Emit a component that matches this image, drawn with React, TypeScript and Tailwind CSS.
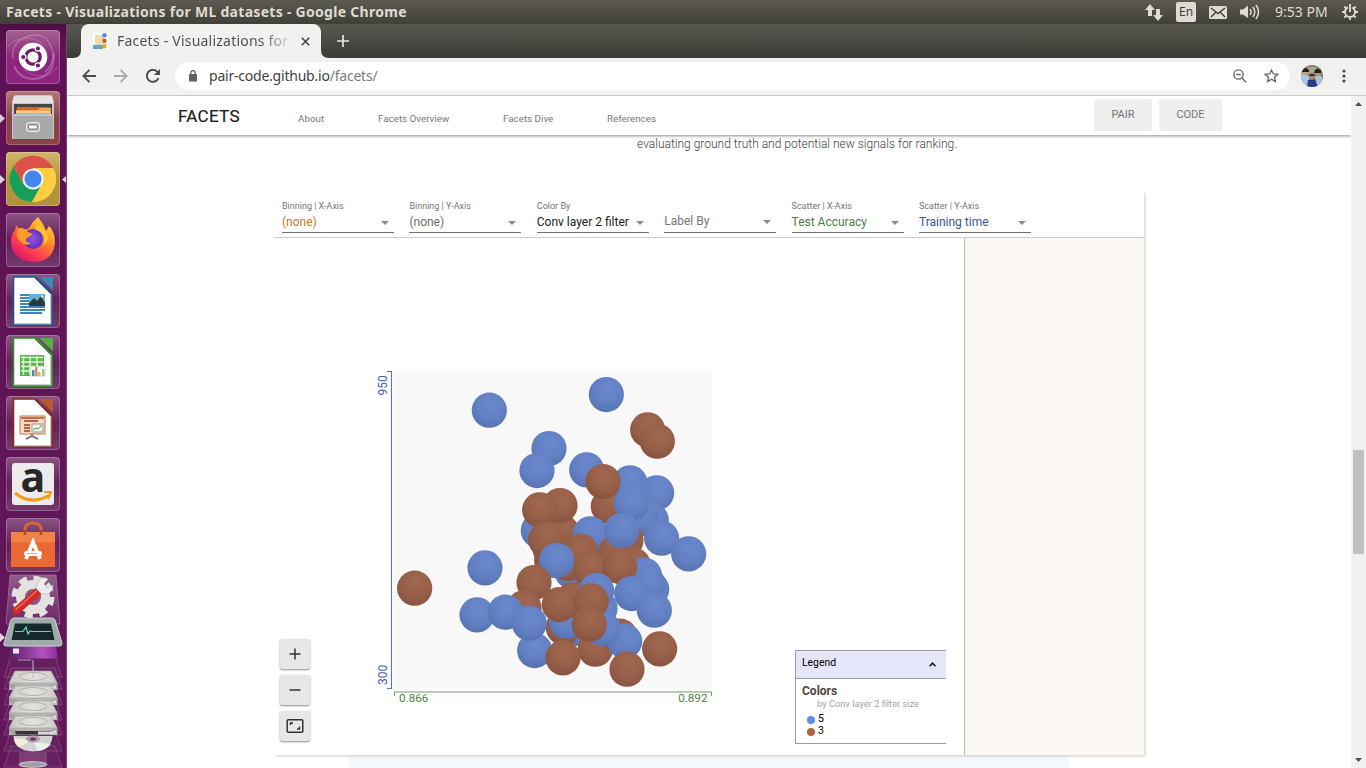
import React from "react";

const UI = "font-['Noto_Sans','Open_Sans',sans-serif]";

/* ---------- Launcher ---------- */

function Tile({ bg, children, left, right }: { bg: string; children: React.ReactNode; left?: boolean; right?: boolean }) {
  return (
    <div className="flex h-[54px] w-[67px] shrink-0 items-center">
      <div className="flex w-[6px] items-center">
        {left && <svg width="6" height="9"><path d="M0 0L5 4.5L0 9Z" fill="#d9cfd7" /></svg>}
      </div>
      <div className={`h-[54px] w-[54px] rounded-[4px] ${bg}`}>
        <svg className="overflow-visible" width="54" height="54" viewBox="0 0 54 54">
          {children}
          <rect x=".5" y=".5" width="53" height="53" rx="3.5" fill="none" stroke="#fff" strokeOpacity=".22" />
        </svg>
      </div>
      <div className="flex w-[7px] items-center justify-end">
        {right && <svg width="6" height="9"><path d="M6 0L1 4.5L6 9Z" fill="#d9cfd7" /></svg>}
      </div>
    </div>
  );
}

const glass = "bg-linear-to-b from-[#8a5482] via-[#651d5b] to-[#743b6c]";

function Sheet({ edge, fold, children }: { edge: string; fold: string; children: React.ReactNode }) {
  return (
    <>
      <path d="M7.5 3H29L46 20V51H7.5Z" fill="#fff" stroke={edge} strokeWidth="1.6" />
      <path d="M9 49.500H44.500V21" fill="none" stroke="#c9c9c9" strokeWidth="1" />
      <path d="M29 3L46 20" stroke={edge} strokeWidth="2" />
      <path d="M33.500 3H47V16.500Z" fill={fold} />
      {children}
    </>
  );
}

function Drive({ y }: { y: number }) {
  return (
    <g transform={`translate(0 ${y})`}>
      <path d="M15 -1H51L57.500 11V18H9V11Z" fill="#bab8b6" />
      <path d="M15 -1H51L57 11H9Z" fill="url(#drv)" stroke="#9d9a97" strokeWidth=".6" />
      <ellipse cx="33" cy="4.500" rx="14" ry="4" fill="none" stroke="#aaa7a4" strokeWidth=".8" />
      <path d="M9 11.500L26 15H40L57.500 11.500V15L52 18H14L9 15Z" fill="#a5a29f" />
      <path d="M15 14H50V17.400H16Z" fill="#373432" />
      <path d="M38 14.500H52L56 13V16L51 17.500H38Z" fill="#dcdad8" />
    </g>
  );
}

function FoldedStack() {
  return (
    <svg width="67" height="195" viewBox="0 573 67 195" className="shrink-0">
      <defs>
        <linearGradient id="desk" x1="0" x2="1"><stop offset="0" stopColor="#581b66" /><stop offset=".7" stopColor="#b254c0" /><stop offset="1" stopColor="#8e2d9d" /></linearGradient>
        <linearGradient id="drv" x1="0" x2="1"><stop offset="0" stopColor="#c9c7c5" /><stop offset=".5" stopColor="#e4e2e0" /><stop offset="1" stopColor="#cfcdcb" /></linearGradient>
        <linearGradient id="tl" x1="0" x2="0" y1="0" y2="1"><stop offset="0" stopColor="#fff" stopOpacity=".3" /><stop offset="1" stopColor="#fff" stopOpacity=".08" /></linearGradient>
      </defs>
      <path d="M10 575H56L60 624H6Z" fill="url(#tl)" stroke="#a17b9c" strokeWidth=".7" />
      <circle cx="33" cy="597" r="17" fill="#e3e2e1" />
      <circle cx="33" cy="597" r="18.500" fill="none" stroke="#e3e2e1" strokeWidth="6" strokeDasharray="8 6.530" />
      <circle cx="33" cy="597" r="8" fill="#87577f" />
      <path d="M12.500 609L36 588L41.500 594L19 613.500Q12 617 12.500 609Z" fill="#cf2c26" />
      <path d="M15.500 610L37 590.500" stroke="#ec6a60" strokeWidth="1.500" />
      <path d="M36 588L39 580Q43 576 48 579L44 584L47 588L53 585Q53 592 47 594L41.500 594Z" fill="#ededed" stroke="#aaa" strokeWidth=".5" />
      {[656, 668, 684, 699, 714, 730, 746].map((y) => (
        <path key={y} d={`M11 ${y}H55L62 ${y + 21}H4Z`} fill="#fff" fillOpacity=".035" stroke="#9f739a" strokeOpacity=".65" strokeWidth=".7" />
      ))}
      <path d="M10 645H56L57.500 658.500H8.500Z" fill="url(#desk)" />
      <path d="M13 648.500h6v5h-6z" fill="#fff" opacity=".9" />
      <path d="M18 660H31" stroke="#ada3ad" />
      <path d="M14 618H52Q54 618 55 620L62 643Q62 646 60 646H6Q3 646 4 643L11 620Q12 618 14 618Z" fill="#9fabaa" stroke="#ccd5d4" strokeWidth="1" />
      <path d="M15 623.500H51L54.500 640H11.500Z" fill="#15282b" />
      <path d="M15 631.500H23L26 627L28 634L30 631L32 631.500H51" fill="none" stroke="#62d6b8" strokeWidth="1.200" />
      <path d="M0 633L5 637.500L0 642Z" fill="#ddd5dc" />
      <Drive y={672} /><Drive y={687} /><Drive y={702} /><Drive y={717} />
      <path d="M33 660V678" stroke="#c3bcc2" strokeWidth="1" />
      <path d="M13.500 736Q14 750.500 33 751.500Q52 750.500 52.500 736Z" fill="#d5d3d1" />
      <path d="M33 740L14 738Q14 743 19 747Z" fill="#f5efdc" /><path d="M33 742L51 744Q46 750 38 751Z" fill="#ecf3ea" />
      <ellipse cx="33" cy="739" rx="7" ry="3.500" fill="#b699b1" /><ellipse cx="33" cy="739" rx="3" ry="1.500" fill="#6a3363" />
      <path d="M19 752H47V765H19Z" fill="#fff" fillOpacity=".14" />
      <ellipse cx="33" cy="764.500" rx="14" ry="2.800" fill="#a39da1" stroke="#e7e3e6" strokeWidth=".8" />
    </svg>
  );
}

function Launcher() {
  return (
    <aside className="flex w-[67px] shrink-0 flex-col gap-[7px] overflow-hidden border-r border-[#7c4274] bg-linear-to-b from-[#4b0d42] via-[#5e1254] via-[3%] to-[#61175a] pt-[6px]">
      <Tile bg="bg-linear-to-b from-[#a4618f] via-[#8d257d] to-[#8e2680]">
        <path d="M7 29Q5 14 18 8Q37 -1 45 16Q51 31 39 42" fill="none" stroke="#dda5d2" strokeOpacity=".5" strokeWidth="1.200" />
        <path d="M48 23Q49 47 28 49Q14 49 8 36" fill="none" stroke="#dda5d2" strokeOpacity=".4" strokeWidth="2" />
        <path d="M2 16Q20 0 40 16M52 36Q39 54 18 40" fill="none" stroke="#dda5d2" strokeOpacity=".35" strokeWidth="1" />
        <circle cx="27" cy="27" r="14.300" fill="#fff" />
        <circle cx="27" cy="27" r="7.200" fill="none" stroke="#701b62" strokeWidth="3.200" />
        <g fill="#701b62" stroke="#fff" strokeWidth="1.200"><circle cx="17.300" cy="27" r="2.700" /><circle cx="31.900" cy="18.500" r="2.700" /><circle cx="31.900" cy="35.500" r="2.700" /></g>
      </Tile>
      <Tile bg="bg-linear-to-b from-[#b77777] via-[#89434a] to-[#91404a]" left>
        <path d="M8 5Q8 4 10 4H44Q46 4 46 5L48 13V48H6V13Z" fill="#c8c8c8" />
        <path d="M8 5H46L48 12H6Z" fill="#e3e3e3" />
        <path d="M8 13H46V26H8Z" fill="#494440" />
        <path d="M11 16H44V24H11Z" fill="#d46924" /><path d="M10 19H31L34 17H45V25H10Z" fill="#f0a552" />
        <path d="M10 21H44" stroke="#fff0da" />
        <path d="M7 23H47V48H7Z" fill="#a9a9a9" /><path d="M8 24H46" stroke="#ddd" />
        <rect x="20.500" y="31.500" width="13" height="9" rx="2" fill="#bbb" stroke="#eee" />
        <rect x="22.500" y="34" width="9" height="4" rx="1" fill="#fff" stroke="#777" />
      </Tile>
      <Tile bg="bg-linear-to-b from-[#d0b76d] via-[#b5933b] to-[#b0933f]" left right>
        <circle cx="27" cy="27" r="23" fill="#f9cb3c" />
        <path d="M27 27L47 15.500A23 23 0 0 0 7.500 14.500L17 32Z" fill="#dc5148" />
        <path d="M7.500 14.500A23 23 0 0 0 26 50L36 32L27 37L17 32Z" fill="#159f5b" />
        <path d="M27 16H47.200A23 23 0 0 1 26 50L36 32Z" fill="#fdce42" />
        <circle cx="27" cy="27" r="10.500" fill="#f4f4f4" /><circle cx="27" cy="27" r="8.500" fill="#4286ee" />
      </Tile>
      <Tile bg={glass}>
        <defs>
          <linearGradient id="fox" x1="1" x2=".3" y1="0" y2="1"><stop offset="0" stopColor="#fff04d" /><stop offset=".4" stopColor="#ff9821" /><stop offset=".72" stopColor="#ff444c" /><stop offset="1" stopColor="#df166f" /></linearGradient>
          <radialGradient id="globe"><stop offset="0" stopColor="#a34ce8" /><stop offset="1" stopColor="#5834c0" /></radialGradient>
        </defs>
        <path d="M9 17L10 12L15 17L22 16L27 9L32 4L37 11L40 18L43 13Q49 19 49 29Q48 48 28 49Q8 48 5 31Q4 23 9 17Z" fill="url(#fox)" />
        <circle cx="27" cy="26" r="10" fill="url(#globe)" />
        <path d="M12 16Q17 13 22 19L27 21L21 25Q17 29 25 30Q20 34 15 29Q8 23 12 16Z" fill="#ff9c2c" />
        <path d="M30 17Q42 20 37 33Q42 29 42 24Q40 15 30 11Z" fill="#ffc72f" />
      </Tile>
      <Tile bg={glass}>
        <Sheet edge="#145b88" fold="#3c8ab7">
          <path d="M14 21H39M14 24H39M14 27H39M14 30H39M14 33H39M14 36H39M14 39H36" stroke="#3d88b8" strokeWidth="1.800" />
          <rect x="23" y="20" width="16" height="12" fill="#62b0df" /><path d="M23 29L28 24L31 27L35 22L39 29V32H23Z" fill="#233d35" /><circle cx="36" cy="22.500" r="1.300" fill="#ffdf67" />
        </Sheet>
      </Tile>
      <Tile bg={glass}>
        <Sheet edge="#299323" fold="#51b343">
          <rect x="14" y="20" width="24" height="21" fill="#54b548" />
          <path d="M15 22.500H37M15 27H37M15 31.500H37M15 36H37M17.500 21V40M24 21V40M31 21V40" stroke="#e5f6e1" strokeWidth="1.500" />
          <rect x="24.500" y="31.500" width="15" height="10" fill="#fff" stroke="#ccc" strokeWidth=".5" />
          <path d="M26 35h2.500v6H26z" fill="#418dca" /><path d="M29 32h2.500v9H29z" fill="#e18a63" /><path d="M32 37h2.500v4H32z" fill="#e8b941" /><path d="M36 34h2.500v7H36z" fill="#90c9a0" />
        </Sheet>
      </Tile>
      <Tile bg={glass}>
        <Sheet edge="#833017" fold="#ba5c2a">
          <path d="M14 20H39V38H14Z" fill="#fbd9c3" stroke="#ca7043" /><path d="M15 22H38" stroke="#ab4c28" strokeWidth="1.500" />
          <path d="M18 25H32M18 29H24M18 32H24M18 35H24" stroke="#963e23" strokeWidth="1.400" /><rect x="26" y="28" width="11" height="8" fill="#edf4e9" stroke="#777" strokeWidth=".7" />
          <path d="M27 34L30 32L32 33L36 29" fill="none" stroke="#41a246" /><path d="M26 38V40L20 43M26 40L32 43" fill="none" stroke="#666" strokeWidth="1.500" />
        </Sheet>
      </Tile>
      <Tile bg={glass}>
        <rect x="6" y="6" width="42" height="42" rx="3" fill="#ececec" />
        <text x="27" y="34.500" textAnchor="middle" fontFamily="Open Sans" fontWeight="700" fontSize="41" fill="#272727">a</text>
        <path d="M9 36Q25 49 44 38" fill="none" stroke="#f89a18" strokeWidth="3" /><path d="M38 35L45 35L42 42" fill="none" stroke="#f89a18" strokeWidth="2" />
      </Tile>
      <Tile bg={glass}>
        <path d="M19 17V10Q20 5 27 5Q34 5 35 10V17" fill="none" stroke="#d76536" strokeWidth="3" />
        <path d="M5 14H49V49H5Z" fill="#ed6932" /><path d="M5 14H49V24H5Z" fill="#f18349" />
        <path d="M19 17V12M35 17V12" stroke="#b54624" strokeWidth="2.500" />
        <path d="M20 41L27 24L34 41" fill="none" stroke="#fff" strokeWidth="3.800" /><rect x="18" y="33" width="18" height="5" rx="2.500" fill="#fff" /><path d="M21 35.500H31" stroke="#f3a67f" strokeWidth="1" />
      </Tile>
      <div className="-mt-[6px]"><FoldedStack /></div>
    </aside>
  );
}

/* ---------- System bar and browser chrome ---------- */

function SystemBar() {
  return (
    <div className={`flex h-[24px] shrink-0 items-center bg-linear-to-b from-[#5c5a50] to-[#403f39] pl-[6px] pr-[8px] text-[#dfdbd2] ${UI}`}>
      <span className="w-[402px] whitespace-nowrap pb-px text-[14px] font-bold leading-[23px] tracking-[0.29px]">Facets - Visualizations for ML datasets - Google Chrome</span>
      <div className="ml-auto flex items-center">
        <svg width="18" height="17" viewBox="0 0 18 17" fill="#dfdbd2"><path d="M5 0L10 6H7V12H3V6H0ZM13 17L8 11H11V5H15V11H18Z" /></svg>
        <span className="ml-[13px] flex h-[20px] w-[20px] items-center justify-center rounded-[2px] bg-[#dfdbd2] text-[12px] leading-[20px] text-[#3c3b37]">En</span>
        <svg className="ml-[13px]" width="18" height="13" viewBox="0 0 18 13"><rect width="18" height="13" rx="1.500" fill="#dfdbd2" /><path d="M2 2L9 7.500L16 2M2 11L6.500 6.500M16 11L11.500 6.500" fill="none" stroke="#3c3b37" strokeWidth="1.400" /></svg>
        <svg className="ml-[13px]" width="20" height="18" viewBox="0 0 20 18"><path d="M0 6.500H3L8 2.500V15L3 11.500H0Z" fill="#dfdbd2" /><path d="M10 6Q12 9 10 12M13 4Q16.500 9 13 14M16 2Q21 9 16 16" fill="none" stroke="#dfdbd2" strokeWidth="1.500" /></svg>
        <span className="ml-[15px] w-[54px] whitespace-nowrap pb-px text-[14px] leading-[23px]">9:53 PM</span>
        <svg className="ml-[13px]" width="16" height="16" viewBox="0 0 16 16" fill="none" stroke="#dfdbd2"><circle cx="8" cy="8" r="5" strokeWidth="1.800" strokeDasharray="27 4.400" strokeDashoffset="-25.300" /><path d="M8 0V8M0 8H3M13 8H16M8 13V16M2.300 2.300L4.500 4.500M13.700 2.300L11.500 4.500M2.300 13.700L4.500 11.500M13.700 13.700L11.500 11.500" strokeWidth="1.900" /></svg>
      </div>
    </div>
  );
}

function TabStrip() {
  return (
    <div className={`flex h-[34px] shrink-0 items-end bg-linear-to-b from-[#595850] to-[#3c3b37] pl-[6px] ${UI}`}>
      <svg width="8" height="8"><path d="M0 8Q8 8 8 0V8Z" fill="#f2f1f0" /></svg>
      <div className="flex h-[34px] w-[240px] items-center rounded-t-[8px] bg-[#f2f1f0] pl-[12px]">
        <svg width="16" height="16" viewBox="0 0 16 16"><rect width="16" height="16" fill="#fff" /><rect x="2" y="2" width="9" height="11" fill="#eed9b1" /><rect y="12" width="10" height="4" fill="#65a6bc" /><circle cx="11.500" cy="2.200" r="2.200" fill="#4f86ee" /><circle cx="11.500" cy="7.800" r="2.200" fill="#c95a23" /><circle cx="11.500" cy="13.200" r="2.200" fill="#e8aa23" /></svg>
        <span className="ml-[8px] w-[174px] whitespace-nowrap bg-linear-to-r from-[#4c4c4c] from-[82%] to-[#4c4c4c22] bg-clip-text text-[14px] leading-[20px] tracking-[0.22px] text-transparent">Facets - Visualizations for</span>
        <svg className="ml-[10px]" width="9" height="9" viewBox="0 0 9 9"><path d="M.8 .8L8.200 8.200M8.200 .8L.8 8.200" stroke="#444" strokeWidth="1.600" /></svg>
      </div>
      <svg width="8" height="8"><path d="M8 8Q0 8 0 0V8Z" fill="#f2f1f0" /></svg>
      <svg className="mb-[11px] ml-[8px]" width="12" height="12"><path d="M6 0V12M0 6H12" stroke="#e7e6e3" strokeWidth="1.700" /></svg>
    </div>
  );
}

function Toolbar() {
  return (
    <div className={`flex h-[38px] shrink-0 items-center border-b border-[#cdcbc9] bg-[#f2f1f0] pb-px pl-[15px] pr-[20px] ${UI}`}>
      <svg width="14" height="14" viewBox="0 0 14 14" fill="none" stroke="#4b4b4b" strokeWidth="1.900"><path d="M14 7H1.500M7.500 .8L1.300 7L7.500 13.200" /></svg>
      <svg className="ml-[18px]" width="14" height="14" viewBox="0 0 14 14" fill="none" stroke="#aaa9a8" strokeWidth="1.900"><path d="M0 7H12.500M6.500 .8L12.700 7L6.500 13.200" /></svg>
      <svg className="ml-[18px]" width="15" height="14" viewBox="0 0 15 14"><path d="M12.500 9A6 6 0 1 1 11.500 3" fill="none" stroke="#4b4b4b" strokeWidth="1.900" /><path d="M14 0V6H8Z" fill="#4b4b4b" /></svg>
      <div className="ml-[14px] flex h-[28px] w-[1115px] items-center rounded-full bg-white pl-[14px] pr-[11px]">
        <svg width="8" height="12" viewBox="0 0 8 12"><rect y="4" width="8" height="7.500" rx=".8" fill="#606060" /><path d="M1.800 5V3Q2 .7 4 .7Q6 .7 6.200 3V5" fill="none" stroke="#606060" strokeWidth="1.200" /></svg>
        <span className="ml-[12px] w-[168px] whitespace-nowrap text-[14px] leading-[20px] tracking-[-0.22px] text-[#3f3f3f]">pair-code.github.io<span className="text-[#7b7b7b]">/facets/</span></span>
        <svg className="ml-auto" width="14" height="14" viewBox="0 0 14 14" fill="none" stroke="#666" strokeWidth="1.400"><circle cx="5.500" cy="5.500" r="4.600" /><path d="M8.900 8.900L13.200 13.200M3.200 5.500H7.800" /></svg>
        <svg className="ml-[17px]" width="15" height="14" viewBox="0 0 15 14" fill="none" stroke="#666" strokeWidth="1.300"><path d="M7.500 1.200L9.400 5L13.700 5.400L10.500 8.200L11.400 12.600L7.500 10.300L3.600 12.600L4.500 8.200L1.300 5.400L5.600 5Z" /></svg>
      </div>
      <svg className="ml-[11px]" width="22" height="22" viewBox="0 0 22 22">
        <defs><clipPath id="av"><circle cx="11" cy="11" r="11" /></clipPath></defs>
        <g clipPath="url(#av)"><path d="M0 0H22V22H0Z" fill="#7b8273" /><path d="M0 9Q5 8 8 12L9 22H0Z" fill="#a3c9eb" /><path d="M14 12Q20 8 22 15V22H13Z" fill="#aebfd1" /><path d="M7 15L14 14L17 22H6Z" fill="#273b85" /><path d="M6 2H15V8H6Z" fill="#a8a687" /><circle cx="4.500" cy="7" r="3.200" fill="#c99e80" /><path d="M1 5Q4 1 8 5V7H1Z" fill="#25201f" /><circle cx="11" cy="12" r="2.700" fill="#b88368" /><path d="M8 11Q11 7 14 11Z" fill="#201d1c" /><circle cx="17" cy="8" r="3" fill="#c48e74" /><path d="M13 8Q14 2 20 5V8Z" fill="#231f1e" /></g>
      </svg>
      <svg className="ml-auto" width="4" height="14" fill="#4b4b4b"><circle cx="2" cy="2" r="1.600" /><circle cx="2" cy="7" r="1.600" /><circle cx="2" cy="12" r="1.600" /></svg>
    </div>
  );
}

/* ---------- Page ---------- */

function SiteHeader() {
  return (
    <header className="relative z-10 flex h-[39px] shrink-0 items-center bg-white pb-px pl-[111px] pr-[129px] shadow-[0_1px_3px_rgba(0,0,0,0.45)]">
      <span className="mt-[2px] w-[120px] text-[17px] leading-[20px] tracking-[0.3px] text-[#212121] [-webkit-text-stroke:0.2px_#212121]">FACETS</span>
      <nav className="mt-[8px] flex text-[9.8px] leading-[14px] text-[#777]">
        <a className="w-[80px]">About</a>
        <a className="w-[125px] whitespace-nowrap">Facets Overview</a>
        <a className="w-[104px] whitespace-nowrap">Facets Dive</a>
        <a>References</a>
      </nav>
      <div className="ml-auto flex gap-[7px] text-[11px] leading-[32px] text-[#757575]">
        <span className="h-[32px] w-[58px] rounded-[2px] bg-[#efefef] text-center">PAIR</span>
        <span className="h-[32px] w-[63px] rounded-[2px] bg-[#efefef] text-center">CODE</span>
      </div>
    </header>
  );
}

function Select({ label, value, tone }: { label?: string; value: string; tone: string }) {
  return (
    <div className="mr-[15.400px] flex w-[112px] flex-col border-b border-[#707070]">
      <span className="h-[12px] whitespace-nowrap text-[9px] leading-[12px] text-[#757575]">{label}</span>
      <div className="flex h-[21px] items-center justify-between pr-[5px]">
        <span className={`whitespace-nowrap text-[12px] leading-[21px] ${tone}`}>{value}</span>
        <svg width="8" height="4"><path d="M0 0H8L4 4Z" fill="#8c8c8c" /></svg>
      </div>
    </div>
  );
}

type Dot = [number, number, "b" | "r"];
/* Listed from back to front, in units of a third of a pixel from the chart's corner. */
const dots: Dot[] = [
  [358, 135, "b"], [709, 88, "b"], [345, 608, "b"], [134, 669, "r"],
  [833, 194, "r"], [862, 228, "r"], [537, 250, "b"], [501, 316, "b"],
  [650, 314, "b"], [715, 423, "r"], [780, 353, "b"], [699, 349, "r"],
  [860, 383, "b"], [844, 466, "b"], [813, 455, "b"], [784, 414, "b"],
  [505, 496, "b"], [575, 500, "r"], [570, 421, "r"], [509, 434, "r"],
  [605, 618, "b"], [545, 585, "r"], [595, 595, "r"], [540, 550, "r"], [527, 523, "r"],
  [725, 545, "b"], [661, 506, "b"], [768, 525, "r"], [738, 560, "r"],
  [875, 519, "b"], [956, 566, "b"], [755, 496, "b"],
  [631, 558, "r"], [660, 612, "r"], [560, 586, "b"],
  [790, 600, "r"], [800, 632, "b"], [823, 630, "b"], [845, 672, "b"], [833, 655, "b"],
  [749, 604, "r"], [785, 685, "b"], [853, 735, "b"],
  [492, 652, "r"], [462, 728, "r"], [630, 790, "b"], [580, 787, "r"], [589, 768, "b"],
  [690, 730, "b"], [610, 703, "r"], [680, 676, "b"], [568, 718, "r"],
  [676, 852, "r"], [750, 813, "r"], [764, 828, "b"], [698, 790, "b"],
  [664, 707, "r"], [658, 777, "r"],
  [321, 749, "b"], [406, 741, "b"], [494, 856, "b"], [478, 774, "b"],
  [579, 878, "r"], [771, 912, "r"], [869, 851, "r"],
];

function Scatter() {
  return (
    <svg className="ml-[60px] mt-[127px] shrink-0" width="350" height="345" viewBox="0 0 350 345" fontFamily="Roboto">
      <defs>
        <radialGradient id="b" cx=".55" cy=".32" r=".75"><stop offset="0" stopColor="#6a88cd" /><stop offset=".55" stopColor="#6380c3" /><stop offset="1" stopColor="#5470ae" /></radialGradient>
        <radialGradient id="r" cx=".55" cy=".32" r=".75"><stop offset="0" stopColor="#a16850" /><stop offset=".55" stopColor="#965f49" /><stop offset="1" stopColor="#85503d" /></radialGradient>
      </defs>
      <rect x="24" y="6.500" width="318" height="317" fill="#f8f8f8" />
      <path d="M17 6.500H21.500V323.500H17" fill="none" stroke="#5d71b7" strokeWidth="1.100" />
      <path d="M24.500 331V327H341.500V331" fill="none" stroke="#729b68" strokeWidth="1.100" />
      <g fontSize="12" fill="#3f59b0">
        <text transform="translate(17 20.500) rotate(-90)" textAnchor="middle">950</text>
        <text transform="translate(17 310) rotate(-90)" textAnchor="middle">300</text>
      </g>
      <g fontSize="11.700" fill="#4f7f40">
        <text x="29" y="337">0.866</text>
        <text x="337.500" y="337" textAnchor="end">0.892</text>
      </g>
      {dots.map(([x, y, c], i) => (
        <circle key={i} cx={x / 3} cy={y / 3 + 0.2} r="17.600" fill={`url(#${c})`} />
      ))}
    </svg>
  );
}

function ZoomButton({ children }: { children: React.ReactNode }) {
  return (
    <button className="flex h-[30px] w-[30px] items-center justify-center rounded-[2px] bg-[#e7e7e7] shadow-[0_1px_2px_rgba(0,0,0,0.45)]">
      <svg width="18" height="18" viewBox="0 0 18 18" fill="none" stroke="#333" strokeWidth="1.500">{children}</svg>
    </button>
  );
}

function Legend() {
  return (
    <section className="mb-[11px] ml-[75px] flex h-[94px] w-[151px] flex-col self-end border-y border-l border-[#9c9c9c]">
      <div className="flex h-[28px] items-center justify-between border-b border-[#9c9c9c] bg-[#e6e6fa] pl-[6px] pr-[10px]">
        <span className="-mt-[3px] text-[10.400px] leading-[14px] text-black">Legend</span>
        <svg width="7" height="5" viewBox="0 0 7 5"><path d="M.5 4.300L3.500 1.200L6.500 4.300" fill="none" stroke="#111" strokeWidth="1.500" /></svg>
      </div>
      <div className="pl-[6px] pt-[5px]">
        <div className="text-[12px] font-bold leading-[15px] text-[#4b4542]">Colors</div>
        <div className="-mt-px pl-[15px] text-[9.300px] leading-[12px] text-[#a3a3a3]">by Conv layer 2 filter size</div>
        <div className="mt-[3px] flex h-[12px] items-center gap-[3px] pl-[5px] text-[10.600px] leading-[12px] text-black"><i className="mt-[2px] h-[8px] w-[8px] rounded-full bg-[#648bee]" />5</div>
        <div className="flex h-[12px] items-center gap-[3px] pl-[5px] text-[10.600px] leading-[12px] text-black"><i className="mt-[2px] h-[8px] w-[8px] rounded-full bg-[#b2643e]" />3</div>
      </div>
    </section>
  );
}

function Facets() {
  return (
    <main className="ml-[207px] flex h-[563px] w-[870px] shrink-0 flex-col bg-white shadow-[1px_1px_3px_rgba(0,0,0,0.2)] [clip-path:inset(0_-5px_-5px_0)]">
      <div className="flex h-[46px] shrink-0 border-b border-[#ccc] pb-[4px] pl-[8px] pt-[8px]">
        <Select label="Binning | X-Axis" value="(none)" tone="text-[#c47b20]" />
        <Select label="Binning | Y-Axis" value="(none)" tone="text-[#6b6b6b]" />
        <Select label="Color By" value="Conv layer 2 filter" tone="text-[#212121]" />
        <Select value="Label By" tone="text-[#757575]" />
        <Select label="Scatter | X-Axis" value="Test Accuracy" tone="text-[#507c42]" />
        <Select label="Scatter | Y-Axis" value="Training time" tone="text-[#3a52a5]" />
      </div>
      <div className="flex h-[517px]">
        <div className="flex w-[690px] shrink-0">
          <div className="mb-[14px] ml-[6px] flex w-[30px] shrink-0 flex-col gap-[6px] self-end">
            <ZoomButton><path d="M9 3.500V14.500M3.500 9H14.500" /></ZoomButton>
            <ZoomButton><path d="M3.500 9H14.500" /></ZoomButton>
            <ZoomButton><rect x="1.200" y="2.800" width="15.600" height="12.400" rx="1" /><path d="M4.500 8V6H7M11 12H13.500V9.500" /></ZoomButton>
          </div>
          <Scatter />
          <Legend />
        </div>
        <div className="flex-1 border-l border-[#bfbfbf] bg-[#fcf8f3]" />
      </div>
    </main>
  );
}

function Scrollbar() {
  return (
    <div className="flex w-[15px] shrink-0 flex-col items-center justify-between bg-[#f1f1f1] py-[6px]">
      <svg width="7" height="4"><path d="M0 4L3.500 0L7 4Z" fill="#505050" /></svg>
      <div className="mt-[139px] h-[104px] w-[11px] bg-[#c1c1c1]" />
      <svg width="7" height="4"><path d="M0 0L3.500 4L7 0Z" fill="#505050" /></svg>
    </div>
  );
}

export default function App() {
  return (
    <div className="flex h-screen w-screen flex-col overflow-hidden bg-white">
      <SystemBar />
      <div className="flex h-[744px]">
        <Launcher />
        <div className="flex w-[1299px] flex-col">
          <TabStrip />
          <Toolbar />
          <div className="flex h-[672px]">
            <div className="flex w-[1284px] flex-col overflow-hidden font-[Roboto,sans-serif]">
              <SiteHeader />
              <p className="h-[57px] pl-[570px] text-[12px] font-light leading-[18px] text-[#424242]">evaluating ground truth and potential new signals for ranking.</p>
              <Facets />
              <div className="ml-[282px] h-[13px] w-[720px] bg-[#f4f8fb]" />
            </div>
            <Scrollbar />
          </div>
        </div>
      </div>
    </div>
  );
}
